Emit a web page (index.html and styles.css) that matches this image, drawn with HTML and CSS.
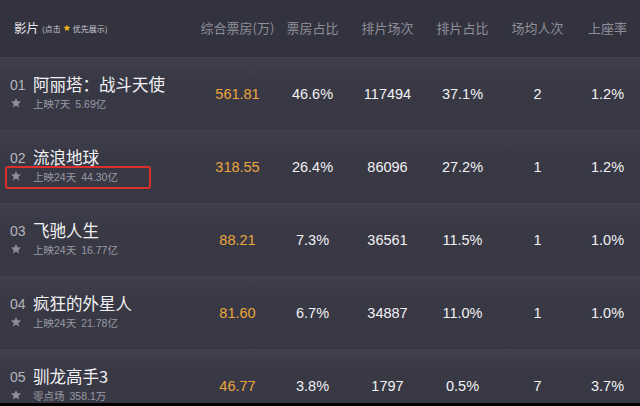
FILE: index.html
```html
<!DOCTYPE html>
<html lang="zh">
<head>
<meta charset="utf-8">
<title>票房</title>
<link rel="stylesheet" href="styles.css">
</head>
<body>
<div class="board">
  <div class="row head">
    <div class="movie-h"><span class="h-title">影片</span><span class="h-hint">(点击<svg class="hstar" viewBox="0 0 24 24"><path d="M12 2l2.9 6.6 7.1.6-5.4 4.7 1.6 7L12 17.2 5.8 20.9l1.6-7L2 9.2l7.1-.6z"/></svg>优先展示)</span></div>
    <div class="cell">综合票房(万)</div>
    <div class="cell">票房占比</div>
    <div class="cell">排片场次</div>
    <div class="cell">排片占比</div>
    <div class="cell">场均人次</div>
    <div class="cell">上座率</div>
  </div>

  <div class="row">
    <div class="movie">
      <div class="line1"><span class="rank">01</span><span class="name">阿丽塔：战斗天使</span></div>
      <div class="line2"><svg class="star" viewBox="0 0 24 24"><path d="M12 2l2.9 6.6 7.1.6-5.4 4.7 1.6 7L12 17.2 5.8 20.9l1.6-7L2 9.2l7.1-.6z"/></svg><span class="sub">上映7天</span><span class="sub amt">5.69亿</span></div>
    </div>
    <div class="cell num gold">561.81</div>
    <div class="cell num">46.6%</div>
    <div class="cell num">117494</div>
    <div class="cell num">37.1%</div>
    <div class="cell num">2</div>
    <div class="cell num">1.2%</div>
  </div>

  <div class="row">
    <div class="movie">
      <div class="line1"><span class="rank">02</span><span class="name">流浪地球</span></div>
      <div class="line2"><svg class="star" viewBox="0 0 24 24"><path d="M12 2l2.9 6.6 7.1.6-5.4 4.7 1.6 7L12 17.2 5.8 20.9l1.6-7L2 9.2l7.1-.6z"/></svg><span class="sub">上映24天</span><span class="sub amt">44.30亿</span></div>
      <div class="mark"></div>
    </div>
    <div class="cell num gold">318.55</div>
    <div class="cell num">26.4%</div>
    <div class="cell num">86096</div>
    <div class="cell num">27.2%</div>
    <div class="cell num">1</div>
    <div class="cell num">1.2%</div>
  </div>

  <div class="row">
    <div class="movie">
      <div class="line1"><span class="rank">03</span><span class="name">飞驰人生</span></div>
      <div class="line2"><svg class="star" viewBox="0 0 24 24"><path d="M12 2l2.9 6.6 7.1.6-5.4 4.7 1.6 7L12 17.2 5.8 20.9l1.6-7L2 9.2l7.1-.6z"/></svg><span class="sub">上映24天</span><span class="sub amt">16.77亿</span></div>
    </div>
    <div class="cell num gold">88.21</div>
    <div class="cell num">7.3%</div>
    <div class="cell num">36561</div>
    <div class="cell num">11.5%</div>
    <div class="cell num">1</div>
    <div class="cell num">1.0%</div>
  </div>

  <div class="row">
    <div class="movie">
      <div class="line1"><span class="rank">04</span><span class="name">疯狂的外星人</span></div>
      <div class="line2"><svg class="star" viewBox="0 0 24 24"><path d="M12 2l2.9 6.6 7.1.6-5.4 4.7 1.6 7L12 17.2 5.8 20.9l1.6-7L2 9.2l7.1-.6z"/></svg><span class="sub">上映24天</span><span class="sub amt">21.78亿</span></div>
    </div>
    <div class="cell num gold">81.60</div>
    <div class="cell num">6.7%</div>
    <div class="cell num">34887</div>
    <div class="cell num">11.0%</div>
    <div class="cell num">1</div>
    <div class="cell num">1.0%</div>
  </div>

  <div class="row">
    <div class="movie">
      <div class="line1"><span class="rank">05</span><span class="name">驯龙高手3</span></div>
      <div class="line2"><svg class="star" viewBox="0 0 24 24"><path d="M12 2l2.9 6.6 7.1.6-5.4 4.7 1.6 7L12 17.2 5.8 20.9l1.6-7L2 9.2l7.1-.6z"/></svg><span class="sub">零点场</span><span class="sub amt">358.1万</span></div>
    </div>
    <div class="cell num gold">46.77</div>
    <div class="cell num">3.8%</div>
    <div class="cell num">1797</div>
    <div class="cell num">0.5%</div>
    <div class="cell num">7</div>
    <div class="cell num">3.7%</div>
  </div>
</div>
</body>
</html>
```

FILE: styles.css
```css
html, body {
  margin: 0;
  padding: 0;
  background: #000;
  width: 640px;
  height: 406px;
  overflow: hidden;
}
.board {
  width: 640px;
  height: 403px;
  overflow: hidden;
  background: #383846;
  font-family: "Noto Sans CJK SC", "Liberation Sans", sans-serif;
}
.row {
  display: grid;
  grid-template-columns: 200px repeat(5, 75px) 1fr;
  height: 73px;
  background: linear-gradient(#3f3f4d, #393946 30%, #383845);
  border-top: 1px solid #42424e;
  box-sizing: border-box;
}
.row.head {
  height: 57px;
  background: #33333f;
  border-top: none;
  align-items: center;
}
.head .cell {
  color: #8e8e99;
  font-size: 13px;
  text-align: center;
  padding-bottom: 3px;
}
.movie-h {
  padding-left: 14px;
  display: flex;
  align-items: center;
  padding-bottom: 3px;
}
.h-title {
  color: #e6e6ea;
  font-size: 12.5px;
}
.h-hint {
  color: #c9c9d0;
  font-size: 8px;
  margin-left: 3px;
  display: flex;
  align-items: center;
  margin-top: 2px;
}
.hstar {
  width: 8px;
  height: 8px;
  fill: #f3b21a;
  margin: 0 2px;
}
.movie {
  position: relative;
  padding: 15px 0 0 10px;
  display: flex;
  flex-direction: column;
}
.line1 {
  display: flex;
  align-items: center;
  height: 22px;
}
.rank {
  width: 23px;
  color: #b4b4bc;
  font-family: "Liberation Sans", sans-serif;
  font-size: 14px;
  padding-top: 2px;
}
.name {
  color: #f2f2f4;
  font-size: 16.5px;
  white-space: nowrap;
}
.line2 {
  display: flex;
  align-items: center;
  height: 16px;
}
.star {
  width: 12px;
  height: 12px;
  fill: #8e8e98;
  margin-right: 11px;
}
.sub {
  color: #9a9aa4;
  font-size: 10.5px;
  font-family: "Liberation Sans", "Noto Sans CJK SC", sans-serif;
}
.amt {
  margin-left: 5px;
}
.mark {
  position: absolute;
  left: 5px;
  top: 35px;
  width: 146px;
  height: 23px;
  border: 2px solid #d9302c;
  border-radius: 3px;
  box-sizing: border-box;
}
.cell.num {
  display: flex;
  align-items: center;
  justify-content: center;
  color: #f1f1f3;
  font-family: "Liberation Sans", sans-serif;
  font-size: 14.5px;
}
.cell.num.gold {
  color: #eba63a;
}
```
